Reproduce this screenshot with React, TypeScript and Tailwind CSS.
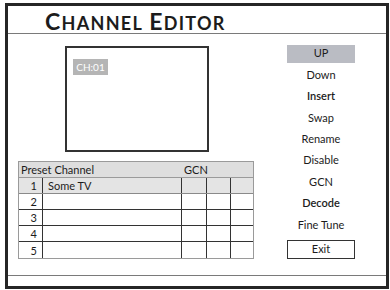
const menu = ['Down', 'Insert', 'Swap', 'Rename', 'Disable', 'GCN', 'Decode', 'Fine Tune'];

const rows = [
  { n: 1, name: 'Some TV' },
  { n: 2, name: '' },
  { n: 3, name: '' },
  { n: 4, name: '' },
  { n: 5, name: '' },
];

function PresetTable() {
  return (
    <div className="w-[236px] border border-[#9a9a9a] text-[11px] leading-none">
      <div className="flex h-[16px] items-center border-b border-[#9a9a9a] bg-[#dedede]">
        <span className="w-[165px] pl-[2px]">Preset Channel</span>
        <span>GCN</span>
      </div>
      {rows.map((r, i) => (
        <div
          key={r.n}
          className={`grid h-[16px] grid-cols-[24px_139px_25px_24px_22px] ${
            i === 0 ? 'bg-[#e4e4e4]' : 'bg-white'
          } ${i < rows.length - 1 ? (i === 0 ? 'border-b border-[#8a8a8a]' : 'border-b border-[#333]') : ''}`}
        >
          <span className="flex items-center justify-end border-r border-[#333] pr-[5px]">{r.n}</span>
          <span className="flex items-center border-r border-[#333] pl-[5px]">{r.name}</span>
          <span className="border-r border-[#333]" />
          <span className="border-r border-[#333]" />
          <span />
        </div>
      ))}
    </div>
  );
}

export default function App() {
  return (
    <div className="h-[290px] w-[390px] bg-white pt-[3px] pl-[5px] font-['Lato','Open_Sans',sans-serif] text-[#1c1c1c]">
      <div className="flex h-[286px] w-[384px] flex-col border-[3px] border-[#262626]">
        <div className="flex h-[28px] items-end border-b border-[#7a7a7a] pl-[37px]">
          <h1 className="flex items-baseline text-[18px] leading-none font-bold tracking-[1.3px]">
            <span className="text-[23px]">C</span>
            <span>HANNEL</span>
            <span className="ml-[6px] text-[23px]">E</span>
            <span>DITOR</span>
          </h1>
        </div>

        <div className="flex flex-1">
          <div className="w-[279px] pt-[12px] pl-[10px]">
            <div className="ml-[47px] h-[106px] w-[144px] border-2 border-[#333] pt-[5px] pl-[6px]">
              <span className="inline-block h-[16px] w-[35px] bg-[#b5b5b5] text-center text-[10px] leading-[16px] text-white">
                CH:01
              </span>
            </div>
            <div className="mt-[9px]">
              <PresetTable />
            </div>
          </div>

          <div className="flex w-[68px] flex-col items-center pt-[9px] text-[11px]">
            <div className="flex h-[21.4px] w-[68px] items-center">
              <div className="flex h-[18px] w-[68px] items-center justify-center bg-[#babcc3]">UP</div>
            </div>
            {menu.map((m) => (
              <div
                key={m}
                className={`flex h-[21.4px] items-center justify-center ${
                  m === 'Decode' || m === 'Insert' ? 'font-semibold' : ''
                }`}
              >
                {m}
              </div>
            ))}
            <div className="mt-[4px] flex h-[19px] w-[68px] items-center justify-center border-[1.5px] border-[#333]">
              Exit
            </div>
          </div>
        </div>

        <div className="h-[11px] border-t border-[#7a7a7a]" />
      </div>
    </div>
  );
}
